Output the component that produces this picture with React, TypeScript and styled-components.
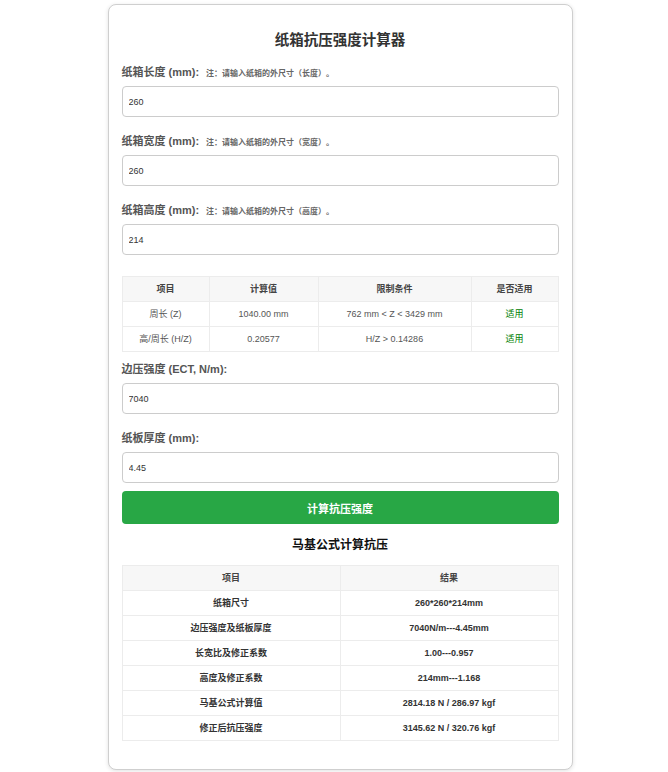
import React from "react";
import styled, { createGlobalStyle } from "styled-components";

const Global = createGlobalStyle`
  html, body { margin: 0; padding: 0; background: #fff; }
  body { font-family: "Liberation Sans", Arial, "Noto Sans CJK SC", sans-serif; }
  * { box-sizing: border-box; }
`;

const Page = styled.div`
  padding: 4px 0 4px 12px;
`;

const Card = styled.div`
  width: 465px;
  margin: 0 auto;
  border: 1px solid #cfcfcf;
  border-radius: 8px;
  box-shadow: 0 1px 4px rgba(0, 0, 0, 0.12);
  background: #fff;
  padding: 25px 13px 28px 13px;
  display: flex;
  flex-direction: column;
`;

const Title = styled.h1`
  margin: 0 0 15px 0;
  height: 20px;
  font-size: 14.5px;
  line-height: 20px;
  font-weight: bold;
  color: #333;
  text-align: center;
`;

const Group = styled.div<{ $mb?: number }>`
  display: flex;
  flex-direction: column;
  margin-bottom: ${(p) => p.$mb ?? 17}px;
`;

const Label = styled.label`
  display: block;
  height: 14px;
  font-size: 11px;
  line-height: 14px;
  font-weight: bold;
  color: #555;
  margin-bottom: 7px;
  white-space: nowrap;
`;

const Note = styled.span`
  font-size: 8px;
  line-height: 14px;
  font-weight: bold;
  color: #666;
  margin-left: 7px;
`;

const Input = styled.input`
  height: 31px;
  width: 100%;
  border: 1px solid #ccc;
  border-radius: 4px;
  padding: 0 6px;
  font-family: "Liberation Sans", Arial, sans-serif;
  font-size: 9px;
  color: #333;
  background: #fff;
  outline: none;
`;

const Table = styled.table<{ $mb?: number }>`
  width: 100%;
  border-collapse: collapse;
  margin-bottom: ${(p) => p.$mb ?? 0}px;
  table-layout: fixed;
`;

const Th = styled.th<{ $w?: number }>`
  height: 25px;
  padding: 0 4px;
  font-size: 9px;
  line-height: 12px;
  font-weight: bold;
  color: #444;
  background: #f7f7f7;
  border: 1px solid #ececec;
  text-align: center;
  ${(p) => (p.$w ? `width: ${p.$w}px;` : "")}
`;

const Td = styled.td<{ $bold?: boolean; $ok?: boolean }>`
  height: 25px;
  padding: 0 4px;
  font-size: 9px;
  line-height: 12px;
  font-weight: ${(p) => (p.$bold ? "bold" : "normal")};
  color: ${(p) => (p.$ok ? "#008000" : p.$bold ? "#333" : "#555")};
  border: 1px solid #ececec;
  text-align: center;
`;

const Button = styled.button`
  height: 33px;
  width: 100%;
  border: none;
  border-radius: 4px;
  background: #28a745;
  color: #fff;
  font-family: "Liberation Sans", Arial, "Noto Sans CJK SC", sans-serif;
  font-size: 11px;
  font-weight: bold;
  margin-top: 8px;
  margin-bottom: 13px;
  cursor: pointer;
`;

const SubTitle = styled.h2`
  margin: 0 0 12px 0;
  height: 16px;
  font-size: 12px;
  line-height: 16px;
  font-weight: bold;
  color: #111;
  text-align: center;
`;

const dims = [
  { label: "纸箱长度 (mm):", note: "注：请输入纸箱的外尺寸（长度）。", value: "260" },
  { label: "纸箱宽度 (mm):", note: "注：请输入纸箱的外尺寸（宽度）。", value: "260" },
  { label: "纸箱高度 (mm):", note: "注：请输入纸箱的外尺寸（高度）。", value: "214" },
];

const checks = [
  ["周长 (Z)", "1040.00 mm", "762 mm < Z < 3429 mm", "适用"],
  ["高/周长 (H/Z)", "0.20577", "H/Z > 0.14286", "适用"],
];

const results = [
  ["纸箱尺寸", "260*260*214mm"],
  ["边压强度及纸板厚度", "7040N/m---4.45mm"],
  ["长宽比及修正系数", "1.00---0.957"],
  ["高度及修正系数", "214mm---1.168"],
  ["马基公式计算值", "2814.18 N / 286.97 kgf"],
  ["修正后抗压强度", "3145.62 N / 320.76 kgf"],
];

export default function App() {
  return (
    <>
      <Global />
      <Page>
        <Card>
          <Title>纸箱抗压强度计算器</Title>
          {dims.map((d, i) => (
            <Group key={d.label} $mb={i === 2 ? 21 : 17}>
              <Label>
                {d.label}
                <Note>{d.note}</Note>
              </Label>
              <Input defaultValue={d.value} />
            </Group>
          ))}
          <Table $mb={10}>
            <thead>
              <tr>
                <Th $w={87}>项目</Th>
                <Th $w={109}>计算值</Th>
                <Th $w={153}>限制条件</Th>
                <Th>是否适用</Th>
              </tr>
            </thead>
            <tbody>
              {checks.map((r) => (
                <tr key={r[0]}>
                  <Td>{r[0]}</Td>
                  <Td>{r[1]}</Td>
                  <Td>{r[2]}</Td>
                  <Td $ok>{r[3]}</Td>
                </tr>
              ))}
            </tbody>
          </Table>
          <Group>
            <Label>边压强度 (ECT, N/m):</Label>
            <Input defaultValue="7040" />
          </Group>
          <Group $mb={0}>
            <Label>纸板厚度 (mm):</Label>
            <Input defaultValue="4.45" />
          </Group>
          <Button>计算抗压强度</Button>
          <SubTitle>马基公式计算抗压</SubTitle>
          <Table>
            <thead>
              <tr>
                <Th>项目</Th>
                <Th>结果</Th>
              </tr>
            </thead>
            <tbody>
              {results.map((r) => (
                <tr key={r[0]}>
                  <Td $bold>{r[0]}</Td>
                  <Td $bold>{r[1]}</Td>
                </tr>
              ))}
            </tbody>
          </Table>
        </Card>
      </Page>
    </>
  );
}
